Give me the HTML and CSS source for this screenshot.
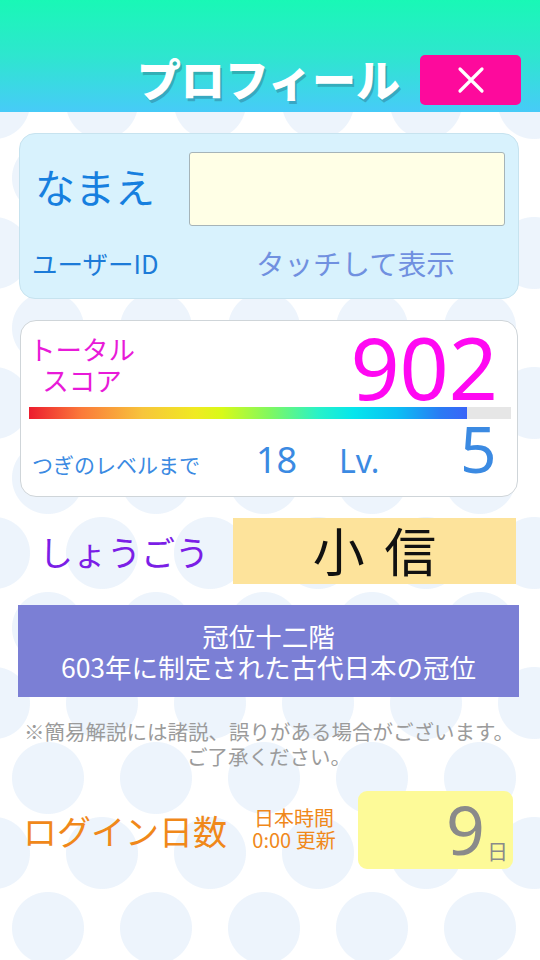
FILE: index.html
```html
<!DOCTYPE html>
<html lang="ja">
<head>
<meta charset="utf-8">
<title>プロフィール</title>
<link rel="stylesheet" href="styles.css">
</head>
<body>
<div class="page">
  <header class="header">
    <h1 class="title">プロフィール</h1>
    <button class="close" aria-label="閉じる">
      <svg width="30" height="30" viewBox="0 0 30 30"><path d="M4 4 L26 26 M26 4 L4 26" stroke="#fff" stroke-width="3.2" stroke-linecap="round"/></svg>
    </button>
  </header>
  <main class="main">
    <section class="card card-name">
      <div class="name-row">
        <span class="name-label">なまえ</span>
        <div class="name-input"></div>
      </div>
      <div class="id-row">
        <span class="id-label">ユーザーID</span>
        <span class="id-value">タッチして表示</span>
      </div>
    </section>

    <section class="card card-score">
      <div class="score-row">
        <div class="score-label">トータル<br>スコア</div>
        <div class="score-value">902</div>
      </div>
      <div class="bar"><div class="bar-fill" style="width:90.9%"></div></div>
      <div class="level-row">
        <span class="next-label">つぎのレベルまで</span>
        <span class="next-value">18</span>
        <span class="lv-label">Lv.</span>
        <span class="lv-value">5</span>
      </div>
    </section>

    <section class="title-row">
      <span class="title-label">しょうごう</span>
      <div class="title-box">小 信</div>
    </section>

    <section class="desc">冠位十二階<br>603年に制定された古代日本の冠位</section>

    <p class="notice">※簡易解説には諸説、誤りがある場合がございます。<br>ご了承ください。</p>

    <section class="login-row">
      <span class="login-label">ログイン日数</span>
      <span class="login-note">日本時間<br>0:00 更新</span>
      <div class="login-box"><span class="login-num">9</span><span class="login-unit">日</span></div>
    </section>
  </main>
</div>
</body>
</html>
```

FILE: styles.css
```css
html, body {
  margin: 0;
  padding: 0;
}
body {
  width: 540px;
  height: 960px;
  overflow: hidden;
  font-family: "Noto Sans CJK JP", "Noto Sans", sans-serif;
  background-color: #ffffff;
  background-image:
    radial-gradient(circle at 54px 75px, #edf4fc 35.5px, rgba(237,244,252,0) 36.5px),
    radial-gradient(circle at 54px 75px, #edf4fc 35.5px, rgba(237,244,252,0) 36.5px);
  background-size: 108px 150px, 108px 150px;
  background-position: -6px -47px, 48px 28px;
  background-repeat: repeat, repeat;
}
.page {
  width: 540px;
  height: 960px;
}
.header {
  height: 112px;
  box-sizing: border-box;
  background: linear-gradient(to bottom, #19f8b6 0%, #2ee6cf 50%, #47cbf8 100%);
  display: flex;
  justify-content: flex-end;
  align-items: flex-end;
  padding: 0 19px 8px 0;
  gap: 20px;
}
.title {
  margin: 0 0 2px 0;
  font-size: 44px;
  font-weight: 900;
  color: #ffffff;
  line-height: 48px;
  text-shadow: 2px 3px 0 rgba(40, 90, 110, 0.35);
}
.close {
  width: 101px;
  height: 50px;
  border: none;
  border-radius: 5px;
  background: #fd0a9c;
  display: flex;
  align-items: center;
  justify-content: center;
  padding: 0;
  margin-bottom: -1px;
}
.main {
  padding: 21px 21px 0 19px;
  display: flex;
  flex-direction: column;
}
.card {
  border-radius: 16px;
  box-sizing: border-box;
}
.card-name {
  height: 166px;
  background: #d8f2fd;
  border: 1.5px solid #c7e3ef;
  padding: 18px 13px 0 15px;
}
.name-row {
  display: flex;
  align-items: center;
  justify-content: space-between;
}
.name-label {
  font-size: 40px;
  color: #167fdf;
  line-height: 44px;
  margin-top: -6px;
}
.name-input {
  width: 316px;
  height: 74px;
  box-sizing: border-box;
  background: #ffffe6;
  border: 1px solid #a6b4b8;
  border-radius: 3px;
}
.id-row {
  display: flex;
  align-items: center;
  margin-top: 16px;
}
.id-label {
  font-size: 25.5px;
  color: #1c7bd8;
  width: 224px;
  margin-left: -3px;
}
.id-value {
  font-size: 28.5px;
  color: #7090e0;
}
.card-score {
  margin-top: 21px;
  height: 177px;
  background: #ffffff;
  border: 1.5px solid #cfd5d9;
  padding: 10px 6px 0 8px;
  margin-left: 1px;
  margin-right: 1px;
}
.score-row {
  display: flex;
  justify-content: space-between;
  align-items: flex-start;
  height: 76px;
}
.score-label {
  font-size: 26.5px;
  line-height: 31px;
  color: #e81ad8;
  text-align: center;
  width: 110px;
  margin-top: 2px;
  margin-left: -2px;
}
.score-value {
  font-family: "Noto Sans", sans-serif;
  font-size: 86px;
  line-height: 84px;
  color: #ff08f2;
  margin-right: 13px;
  margin-top: -6px;
}
.bar {
  height: 12px;
  background: #e6e6e6;
}
.bar-fill {
  height: 100%;
  background: linear-gradient(to right, #ec1c2e 0%, #fb7a3a 12%, #f7c53b 26%, #f0ea22 38%, #d8fa18 44%, #80f860 55%, #28f2c8 66%, #06e6ec 74%, #0ac0f4 84%, #2a7af4 94%, #3a64f8 100%);
}
.level-row {
  display: flex;
  align-items: baseline;
  margin-top: -1px;
  height: 62px;
  color: #3b8ae2;
}
.next-label {
  font-size: 21px;
  width: 224px;
  margin-left: 3px;
}
.next-value {
  font-family: "Noto Sans", sans-serif;
  font-size: 36px;
  width: 83px;
}
.lv-label {
  font-family: "Noto Sans", sans-serif;
  font-size: 32px;
  width: 121px;
}
.lv-value {
  font-family: "Noto Sans", sans-serif;
  font-size: 64px;
  line-height: 62px;
}
.title-row {
  margin-top: 21px;
  display: flex;
  align-items: center;
  justify-content: space-between;
}
.title-label {
  font-size: 34px;
  color: #7b1ee6;
  margin-left: 20px;
}
.title-box {
  width: 283px;
  height: 66px;
  margin-right: 3px;
  background: #fde39b;
  display: flex;
  align-items: center;
  justify-content: center;
  font-size: 52px;
  color: #111;
  line-height: 1;
  word-spacing: 8px;
  padding-bottom: 2px;
  box-sizing: border-box;
}
.desc {
  margin-top: 21px;
  height: 92px;
  margin-left: -1px;
  background: #7b7fd5;
  color: #ffffff;
  font-size: 26.5px;
  line-height: 31px;
  text-align: center;
  display: flex;
  align-items: center;
  justify-content: center;
}
.notice {
  margin: 22px -14px 0 -14px;
  font-size: 20.5px;
  line-height: 25px;
  color: #9b9b9b;
  text-align: center;
}
.login-row {
  margin-top: 22px;
  display: flex;
  align-items: center;
}
.login-label {
  font-size: 34px;
  color: #f0881a;
  margin-left: 4px;
  width: 224px;
}
.login-note {
  font-size: 20px;
  line-height: 22px;
  color: #f0881a;
  text-align: center;
  width: 94px;
  margin-top: -2px;
}
.login-box {
  margin-left: 17px;
  width: 155px;
  height: 78px;
  background: #fdfa98;
  border-radius: 9px;
  display: flex;
  align-items: flex-end;
  justify-content: flex-end;
  padding: 0 5px 4px 0;
  box-sizing: border-box;
  color: #8a8a8a;
}
.login-num {
  font-family: "Noto Sans", sans-serif;
  font-size: 68px;
  line-height: 72px;
}
.login-unit {
  font-size: 21px;
  line-height: 30px;
  margin-left: 2px;
}
```
